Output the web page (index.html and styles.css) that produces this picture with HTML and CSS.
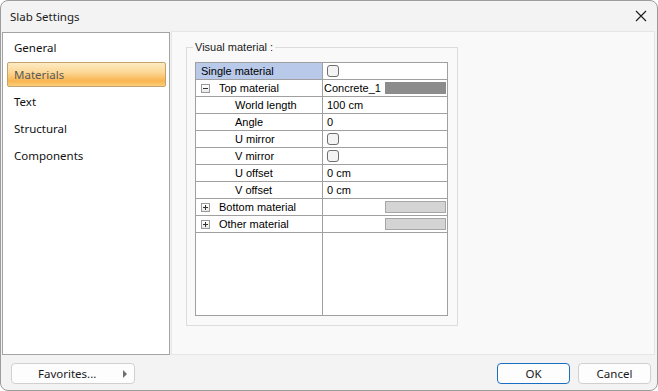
FILE: index.html
```html
<!DOCTYPE html>
<html lang="en">
<head>
    <meta charset="UTF-8">
    <title>Slab Settings</title>
    <link rel="stylesheet" href="styles.css">
</head>
<body>

<div class="window">
    <!-- Title bar -->
    <div class="titlebar">
        <span class="title">Slab Settings</span>
        <svg class="close" width="12" height="12" viewBox="0 0 12 12">
            <path d="M1 1 L11 11 M11 1 L1 11" stroke="#1b1b1b" stroke-width="1.1" fill="none"/>
        </svg>
    </div>

    <div class="main">
        <!-- Page list -->
        <ul class="nav">
            <li>General</li>
            <li class="active">Materials</li>
            <li>Text</li>
            <li>Structural</li>
            <li>Components</li>
        </ul>

        <!-- Materials page -->
        <div class="page">
            <fieldset class="group">
                <legend>Visual material :</legend>
                <div class="grid">
                    <div class="row">
                        <div class="name selected">Single material</div>
                        <div class="value"><span class="check"></span></div>
                    </div>
                    <div class="row">
                        <div class="name"><span class="toggle minus"></span>Top material</div>
                        <div class="value editor">Concrete_1<span class="swatch dark"></span></div>
                    </div>
                    <div class="row">
                        <div class="name sub">World length</div>
                        <div class="value">100 cm</div>
                    </div>
                    <div class="row">
                        <div class="name sub">Angle</div>
                        <div class="value">0</div>
                    </div>
                    <div class="row">
                        <div class="name sub">U mirror</div>
                        <div class="value"><span class="check"></span></div>
                    </div>
                    <div class="row">
                        <div class="name sub">V mirror</div>
                        <div class="value"><span class="check"></span></div>
                    </div>
                    <div class="row">
                        <div class="name sub">U offset</div>
                        <div class="value">0 cm</div>
                    </div>
                    <div class="row">
                        <div class="name sub">V offset</div>
                        <div class="value">0 cm</div>
                    </div>
                    <div class="row">
                        <div class="name"><span class="toggle plus"></span>Bottom material</div>
                        <div class="value editor"><span class="swatch light"></span></div>
                    </div>
                    <div class="row">
                        <div class="name"><span class="toggle plus"></span>Other material</div>
                        <div class="value editor"><span class="swatch light"></span></div>
                    </div>
                    <div class="row filler">
                        <div class="name"></div>
                        <div class="value"></div>
                    </div>
                </div>
            </fieldset>
        </div>
    </div>

    <!-- Buttons -->
    <div class="footer">
        <button class="btn fav"><span>Favorites...</span><span class="arrow"></span></button>
        <div class="actions">
            <button class="btn default">OK</button>
            <button class="btn">Cancel</button>
        </div>
    </div>
</div>

</body>
</html>
```

FILE: styles.css
```css
* {
    margin: 0;
    padding: 0;
    box-sizing: border-box;
}

body {
    background: #ffffff;
    font-family: 'Noto Sans', sans-serif;
    font-size: 11.5px;
    color: #000;
}

/* Window frame */
.window {
    width: 658px;
    height: 391px;
    border: 1px solid #9c9c9c;
    border-radius: 8px;
    background: #f3f3f3;
    display: flex;
    flex-direction: column;
    overflow: hidden;
}

.titlebar {
    height: 30px;
    display: flex;
    align-items: center;
    justify-content: space-between;
    padding: 0 9px 0 9px;
}

.title {
    font-size: 11.5px;
    color: #1a1a1a;
}

.close {
    margin-right: 1px;
}

.main {
    height: 324px;
    display: flex;
    align-items: flex-start;
}

/* Left page list */
.nav {
    list-style: none;
    width: 168px;
    height: 323px;
    margin: 1px 0 0 1px;
    padding: 2px 3px 0 4px;
    background: #fff;
    border: 1px solid #a3a3a3;
    display: flex;
    flex-direction: column;
    gap: 2px;
}

.nav li {
    height: 25px;
    line-height: 23px;
    padding-left: 6px;
    border: 1px solid transparent;
    color: #111;
}

.nav li.active {
    color: #5a5a5a;
    border-color: #c4a46c;
    border-radius: 2px;
    background: linear-gradient(#fdebc2 0%, #fcd897 40%, #f9b54f 78%, #fbcf7c 100%);
}

/* Right page */
.page {
    width: 484px;
    height: 324px;
    margin-left: 1px;
    padding: 7px 0 0 14px;
    background: #f9f9f9;
    border: 1px solid #e6e6e6;
}

.group {
    width: 272px;
    min-width: 0;
    padding: 0 9px 9px 8px;
    border: 1px solid #dcdcdc;
}

.group legend {
    margin-left: -2px;
    padding: 0 2px;
    line-height: 16px;
    font-family: 'Liberation Sans', sans-serif;
    font-size: 11px;
    color: #1a1a1a;
}

/* Property grid */
.grid {
    width: 253px;
    height: 254px;
    margin-top: 7px;
    background: #fff;
    border: 1px solid #a0a0a0;
    display: flex;
    flex-direction: column;
    font-family: 'Liberation Sans', sans-serif;
    font-size: 11px;
}

.row {
    height: 17px;
    display: flex;
    border-bottom: 1px solid #a0a0a0;
    flex-shrink: 0;
}

.row.filler {
    flex: 1;
    border-bottom: none;
}

.name {
    width: 127px;
    border-right: 1px solid #a0a0a0;
    padding-left: 5px;
    line-height: 16px;
    display: flex;
    align-items: center;
    white-space: nowrap;
}

.name.selected {
    background: #b8c9e9;
}

.name.sub {
    padding-left: 39px;
}

.value {
    flex: 1;
    display: flex;
    align-items: center;
    padding-left: 4px;
    line-height: 16px;
    white-space: nowrap;
}

.value.editor {
    padding-left: 1px;
}

.toggle {
    width: 9px;
    height: 9px;
    margin-right: 9px;
    border: 1px solid #9a9a9a;
    background: linear-gradient(#ffffff, #e9e9e9);
    position: relative;
}

.toggle::before,
.toggle.plus::after {
    content: '';
    position: absolute;
    background: #333;
}

.toggle::before {
    left: 1px;
    top: 3px;
    width: 5px;
    height: 1px;
}

.toggle.plus::after {
    left: 3px;
    top: 1px;
    width: 1px;
    height: 5px;
}

.check {
    width: 12px;
    height: 12px;
    border: 1px solid #6f6f6f;
    border-radius: 3px;
    background: #f4f4f4;
}

.swatch {
    margin-left: auto;
    margin-right: 1px;
    width: 61px;
    height: 12px;
}

.swatch.dark {
    background: #8c8c8c;
}

.swatch.light {
    background: #d4d4d4;
    border: 1px solid #a6a6a6;
}

/* Footer buttons */
.footer {
    height: 35px;
    display: flex;
    align-items: flex-start;
    justify-content: space-between;
    padding: 8px 6px 0 10px;
}

.actions {
    display: flex;
    gap: 8px;
}

.btn {
    height: 21px;
    width: 73px;
    font-family: 'Noto Sans', sans-serif;
    font-size: 11.5px;
    color: #1a1a1a;
    background: #fdfdfd;
    border: 1px solid #d0d0d0;
    border-radius: 4px;
}

.btn.default {
    border-color: #1a6fc4;
}

.btn.fav {
    width: 124px;
    display: flex;
    align-items: center;
    justify-content: space-between;
    padding: 0 7px 0 26px;
}

.arrow {
    width: 0;
    height: 0;
    border-left: 4px solid #6e6e6e;
    border-top: 4px solid transparent;
    border-bottom: 4px solid transparent;
}
```
